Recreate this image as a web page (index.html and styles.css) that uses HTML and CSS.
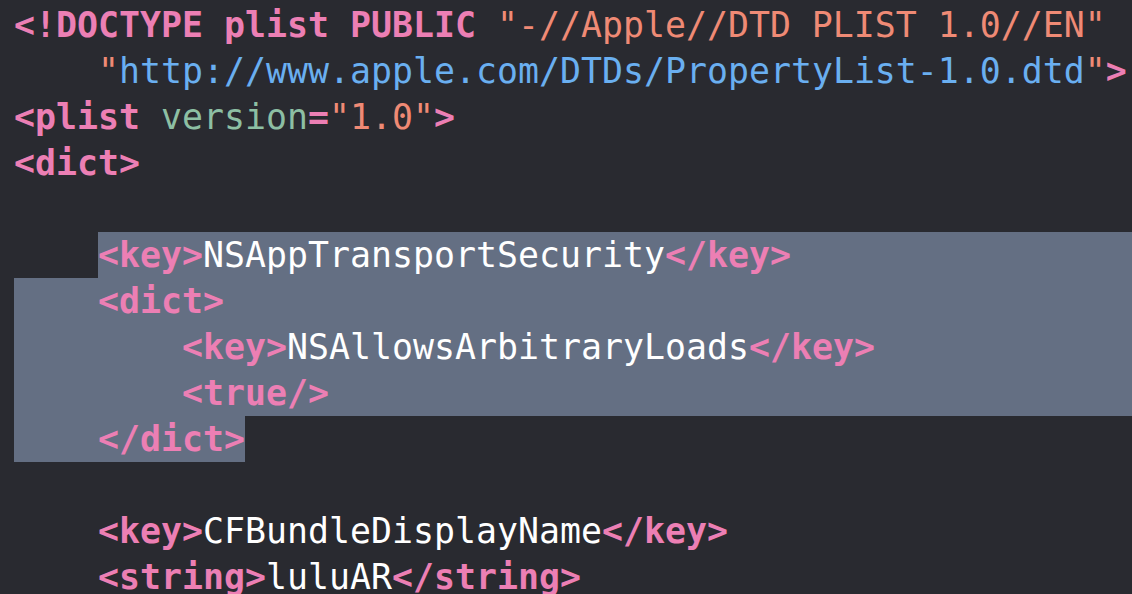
FILE: index.html
```html
<!DOCTYPE html>
<html>
<head>
<meta charset="UTF-8">
<title>Info.plist</title>
<link rel="stylesheet" href="styles.css">
</head>
<body>

<div class="editor">

<div class="line"><span class="tag">&lt;!DOCTYPE plist PUBLIC </span><span class="str">"-//Apple//DTD PLIST 1.0//EN"</span></div>
<div class="line"><span>    </span><span class="str">"</span><span class="url">http://www.apple.com/DTDs/PropertyList-1.0.dtd</span><span class="str">"</span><span class="tag">&gt;</span></div>
<div class="line"><span class="tag">&lt;plist </span><span class="attr">version</span><span class="tag">=</span><span class="str">"1.0"</span><span class="tag">&gt;</span></div>
<div class="line"><span class="tag">&lt;dict&gt;</span></div>
<div class="line"> </div>

<div class="line"><span>    </span><span class="sel fill"><span class="tag">&lt;key&gt;</span>NSAppTransportSecurity<span class="tag">&lt;/key&gt;</span></span></div>
<div class="line sel"><span class="tag">    &lt;dict&gt;</span></div>
<div class="line sel"><span>        </span><span class="tag">&lt;key&gt;</span><span>NSAllowsArbitraryLoads</span><span class="tag">&lt;/key&gt;</span></div>
<div class="line sel"><span class="tag">        &lt;true/&gt;</span></div>
<div class="line"><span class="sel tag">    &lt;/dict&gt;</span></div>

<div class="line"> </div>
<div class="line"><span>    </span><span class="tag">&lt;key&gt;</span><span>CFBundleDisplayName</span><span class="tag">&lt;/key&gt;</span></div>
<div class="line"><span>    </span><span class="tag">&lt;string&gt;</span><span>luluAR</span><span class="tag">&lt;/string&gt;</span></div>

</div>

</body>
</html>
```

FILE: styles.css
```css
body{
    margin:0;
    background:#292a30;
    overflow:hidden;
}

.editor{
    padding:2px 0 0 14px;
    font-family:"DejaVu Sans Mono", "Liberation Mono", monospace;
    font-size:34.88px;
    line-height:46px;
    color:#ffffff;
}

.line{
    display:flex;
    height:46px;
    white-space:pre;
}

/* selection */
.sel{
    background:#646f83;
}

.fill{
    flex:1;
}

/* syntax colours */
.tag{
    color:#ec7fb4;
    font-weight:bold;
}

.str{
    color:#ef8a75;
}

.url{
    color:#6aaff0;
}

.attr{
    color:#8dbfa3;
}
```
